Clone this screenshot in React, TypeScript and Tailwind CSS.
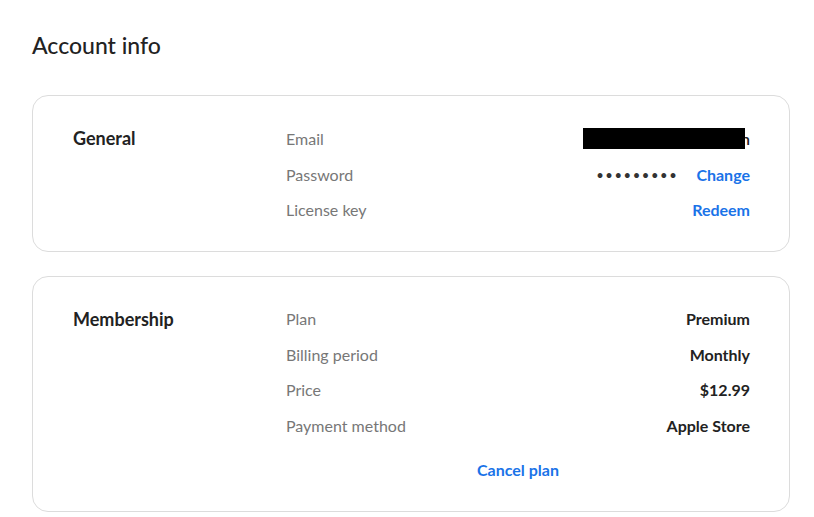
export default function App() {
  const general = [
    { label: "Email", value: "email" },
    { label: "Password", value: "password" },
    { label: "License key", value: "license" },
  ];

  const membership = [
    { label: "Plan", value: "Premium" },
    { label: "Billing period", value: "Monthly" },
    { label: "Price", value: "$12.99" },
    { label: "Payment method", value: "Apple Store" },
  ];

  return (
    <div className="min-h-screen bg-white pl-8 pr-6 pt-[30px] text-[#222] font-['Lato',sans-serif]">
      <h1 className="text-[23px] font-medium leading-[30px]">Account info</h1>

      <div className="mt-[35px] flex flex-col gap-6">
        {/* General */}
        <section className="flex rounded-2xl border border-[#dcdcdc] pl-10 pr-[39px] pt-[32px] pb-[31px]">
          <h2 className="w-[213px] text-[18px] font-bold leading-5">General</h2>
          <div className="flex flex-1 flex-col gap-[15.5px] text-[16px] leading-5">
            {general.map((row) => (
              <div key={row.label} className="flex items-center justify-between">
                <span className="text-[#777]">{row.label}</span>
                {row.value === "email" && (
                  <span className="flex items-center font-semibold">
                    <span className="relative z-10 -mr-[4px] h-[21px] w-[162px] bg-black" />
                    <span>n</span>
                  </span>
                )}
                {row.value === "password" && (
                  <span className="flex items-center">
                    <span className="mr-[18px] text-[13px] tracking-[1.6px] text-[#333]">•••••••••</span>
                    <a className="font-bold text-[#1a73e8]">Change</a>
                  </span>
                )}
                {row.value === "license" && (
                  <a className="font-bold text-[#1a73e8]">Redeem</a>
                )}
              </div>
            ))}
          </div>
        </section>

        {/* Membership */}
        <section className="flex rounded-2xl border border-[#dcdcdc] pl-10 pr-[39px] pt-[32px] pb-[31px]">
          <h2 className="w-[213px] text-[18px] font-bold leading-5">Membership</h2>
          <div className="flex flex-1 flex-col text-[16px] leading-5">
            <div className="flex flex-col gap-[15.5px]">
              {membership.map((row) => (
                <div key={row.label} className="flex items-center justify-between">
                  <span className="text-[#777]">{row.label}</span>
                  <span className="font-bold">{row.value}</span>
                </div>
              ))}
            </div>
            <a className="mt-[24px] self-center font-bold text-[#1a73e8]">Cancel plan</a>
          </div>
        </section>
      </div>
    </div>
  );
}
